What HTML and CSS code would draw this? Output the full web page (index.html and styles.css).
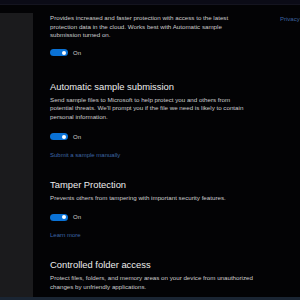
FILE: index.html
```html
<!DOCTYPE html>
<html>
<head>
<meta charset="utf-8">
<link rel="stylesheet" href="styles.css">
</head>
<body>
<div class="frame">
  <div class="topbar"></div>
  <div class="row">
    <div class="side"></div>
    <div class="main">
      <p class="desc">Provides increased and faster protection with access to the latest<br>protection data in the cloud. Works best with Automatic sample<br>submission turned on.</p>
      <div class="toggle-row t-first"><span class="toggle"><span class="knob"></span></span><span class="on">On</span></div>

      <h2 class="heading h-first">Automatic sample submission</h2>
      <p class="desc">Send sample files to Microsoft to help protect you and others from<br>potential threats. We'll prompt you if the file we need is likely to contain<br>personal information.</p>
      <div class="toggle-row"><span class="toggle"><span class="knob"></span></span><span class="on">On</span></div>
      <a class="link">Submit a sample manually</a>

      <h2 class="heading">Tamper Protection</h2>
      <p class="desc">Prevents others from tampering with important security features.</p>
      <div class="toggle-row"><span class="toggle"><span class="knob"></span></span><span class="on">On</span></div>
      <a class="link">Learn more</a>

      <h2 class="heading">Controlled folder access</h2>
      <p class="desc">Protect files, folders, and memory areas on your device from unauthorized<br>changes by unfriendly applications.</p>
    </div>
    <div class="aside"><a class="privacy">Privacy</a></div>
  </div>
  <div class="bottombar"></div>
</div>
</body>
</html>
```
FILE: styles.css
```css
html, body {
  margin: 0;
  padding: 0;
  background: #000;
}
.frame {
  width: 300px;
  height: 300px;
  overflow: hidden;
  display: flex;
  flex-direction: column;
  background: #030305;
  font-family: "Liberation Sans", "Open Sans", sans-serif;
}
.topbar {
  height: 4px;
  flex: none;
  background: #0b0b16;
  border-bottom: 1px solid #14141f;
}
.row {
  flex: 1;
  display: flex;
  min-height: 0;
}
.side {
  width: 33px;
  flex: none;
  margin-top: 8px;
  background: #1b1b1d;
}
.main {
  flex: 1;
  padding-left: 17px;
  padding-top: 9px;
  min-width: 0;
}
.aside {
  width: 20px;
  flex: none;
  padding-top: 10px;
}
.privacy {
  display: block;
  font-size: 6px;
  line-height: 8px;
  color: #3d63a0;
  white-space: nowrap;
}
.desc {
  margin: 0;
  font-size: 6.2px;
  line-height: 8.6px;
  color: #cdcdcd;
  white-space: nowrap;
}
.toggle-row {
  display: flex;
  align-items: center;
  gap: 5px;
  margin-top: 11px;
  height: 8px;
}
.t-first {
  margin-top: 9px;
}
.toggle {
  width: 18px;
  height: 7px;
  border-radius: 4px;
  background: #0a72d6;
  display: flex;
  align-items: center;
  justify-content: flex-end;
  padding-right: 2px;
  box-sizing: border-box;
}
.knob {
  width: 4px;
  height: 4px;
  border-radius: 50%;
  background: #fff;
}
.on {
  font-size: 6px;
  color: #d0d0d0;
}
.link {
  display: block;
  margin-top: 10px;
  font-size: 6px;
  line-height: 8px;
  color: #3d66a6;
}
.heading {
  margin: 20px 0 3px;
  font-size: 9.4px;
  line-height: 12px;
  font-weight: normal;
  color: #ededed;
}
.h-first {
  margin-top: 24px;
}
.bottombar {
  height: 3px;
  flex: none;
  background: #1a2533;
}
```
